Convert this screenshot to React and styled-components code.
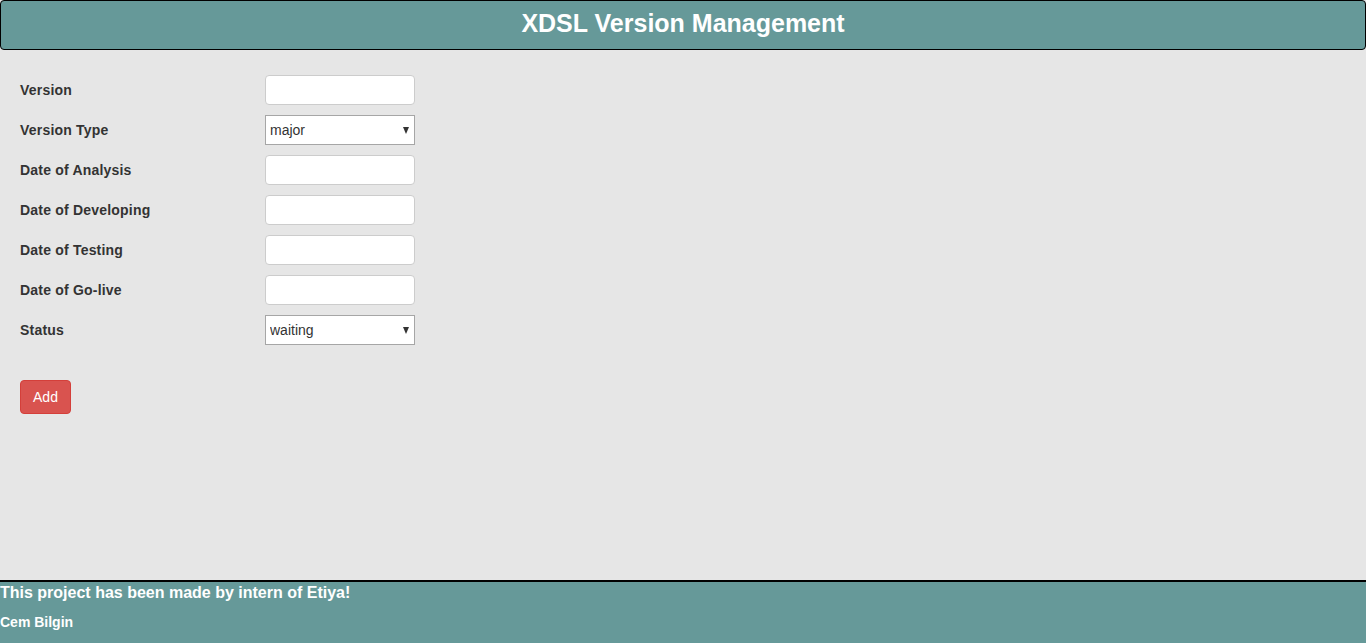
import styled, { createGlobalStyle } from 'styled-components';

const GlobalStyle = createGlobalStyle`
  html, body {
    margin: 0;
    padding: 0;
    background: #e6e6e6;
    font-family: "Liberation Sans", Arial, sans-serif;
    color: #333;
  }
  * { box-sizing: border-box; }
`;

const Page = styled.div`
  display: flex;
  flex-direction: column;
  height: 100vh;
`;

const Header = styled.header`
  height: 50px;
  background: #669999;
  border: 1px solid #000;
  border-radius: 4px;
  display: flex;
  align-items: center;
  justify-content: center;
`;

const Title = styled.h1`
  margin: 0;
  color: #fff;
  font-size: 25px;
  font-weight: bold;
  padding-bottom: 4px;
`;

const Main = styled.main`
  flex: 1;
  padding: 25px 20px 0;
`;

const Form = styled.form`
  display: flex;
  flex-direction: column;
  gap: 10px;
`;

const Row = styled.div`
  display: grid;
  grid-template-columns: 245px 150px;
  align-items: center;
  height: 30px;
`;

const Label = styled.label`
  font-size: 14px;
  font-weight: bold;
  letter-spacing: 0.2px;
  color: #333;
`;

const Input = styled.input`
  width: 150px;
  height: 30px;
  border: 1px solid #ccc;
  border-radius: 4px;
  background: #fff;
  padding: 0 6px;
  font: inherit;
  font-size: 14px;
`;

const SelectWrap = styled.div`
  position: relative;
  width: 150px;
  height: 30px;

  &::after {
    content: '';
    position: absolute;
    right: 6px;
    top: 12px;
    border-left: 3.5px solid transparent;
    border-right: 3.5px solid transparent;
    border-top: 7px solid #333;
    pointer-events: none;
  }
`;

const Select = styled.select`
  appearance: none;
  width: 150px;
  height: 30px;
  border: 1px solid #a6a6a6;
  border-radius: 0;
  background: #fff;
  padding: 0 4px;
  font-family: "Liberation Sans", Arial, sans-serif;
  font-size: 14px;
  color: #333;
`;

const Button = styled.button`
  margin-top: 25px;
  width: 51px;
  height: 34px;
  background: #d9534f;
  border: 1px solid #d43f3a;
  border-radius: 4px;
  color: #fff;
  font-family: "Liberation Sans", Arial, sans-serif;
  font-size: 14px;
  padding: 0;
`;

const Footer = styled.footer`
  height: 63px;
  background: #669999;
  border-top: 2px solid #000;
  color: #fff;
  font-weight: bold;
`;

const FooterTitle = styled.div`
  font-size: 16px;
  line-height: 20px;
  padding-top: 1px;
`;

const FooterName = styled.div`
  font-size: 14px;
  margin-top: 11px;
`;

const textFields = ['Version'];
const dateFields = ['Date of Analysis', 'Date of Developing', 'Date of Testing', 'Date of Go-live'];

const App = () => (
  <Page>
    <GlobalStyle />
    <Header>
      <Title>XDSL Version Management</Title>
    </Header>
    <Main>
      <Form onSubmit={e => e.preventDefault()}>
        {textFields.map(f => (
          <Row key={f}>
            <Label>{f}</Label>
            <Input type="text" />
          </Row>
        ))}
        <Row>
          <Label>Version Type</Label>
          <SelectWrap>
            <Select defaultValue="major">
              <option value="major">major</option>
              <option value="minor">minor</option>
            </Select>
          </SelectWrap>
        </Row>
        {dateFields.map(f => (
          <Row key={f}>
            <Label>{f}</Label>
            <Input type="text" />
          </Row>
        ))}
        <Row>
          <Label>Status</Label>
          <SelectWrap>
            <Select defaultValue="waiting">
              <option value="waiting">waiting</option>
              <option value="done">done</option>
            </Select>
          </SelectWrap>
        </Row>
        <div>
          <Button type="submit">Add</Button>
        </div>
      </Form>
    </Main>
    <Footer>
      <FooterTitle>This project has been made by intern of Etiya!</FooterTitle>
      <FooterName>Cem Bilgin</FooterName>
    </Footer>
  </Page>
);

export default App;
